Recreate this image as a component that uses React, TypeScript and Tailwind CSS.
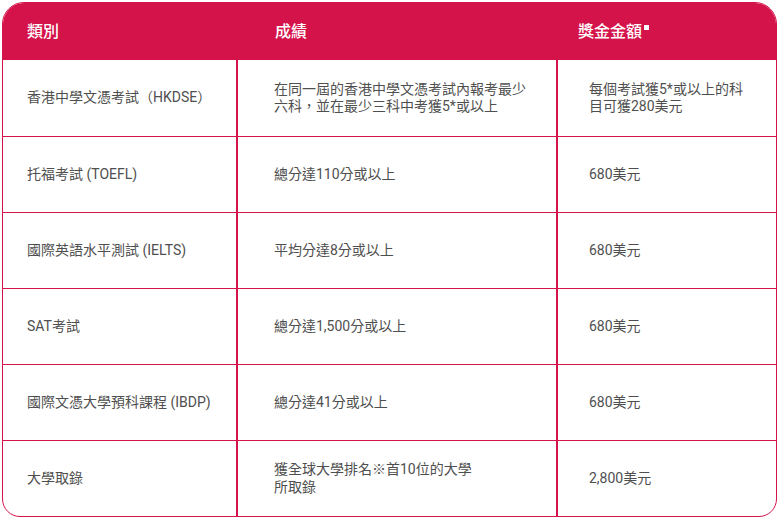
const rows = [
  {
    type: "香港中學文憑考試（HKDSE）",
    result: ["在同一屆的香港中學文憑考試內報考最少", "六科，並在最少三科中考獲5*或以上"],
    award: ["每個考試獲5*或以上的科", "目可獲280美元"],
  },
  { type: "托福考試 (TOEFL)", result: ["總分達110分或以上"], award: ["680美元"] },
  { type: "國際英語水平測試 (IELTS)", result: ["平均分達8分或以上"], award: ["680美元"] },
  { type: "SAT考試", result: ["總分達1,500分或以上"], award: ["680美元"] },
  { type: "國際文憑大學預科課程 (IBDP)", result: ["總分達41分或以上"], award: ["680美元"] },
  { type: "大學取錄", result: ["獲全球大學排名※首10位的大學", "所取錄"], award: ["2,800美元"] },
];

export default function App() {
  return (
    <div
      className="w-[779px] h-[519px] bg-white p-[2px]"
      style={{ fontFamily: 'Roboto, "Noto Sans CJK TC", sans-serif' }}
    >
      <div className="w-[775px] rounded-tl-[22px] rounded-tr-[22px] rounded-bl-[18px] rounded-br-[18px] border-[1.5px] border-[#d4134a] overflow-hidden">
        <div className="grid grid-cols-[235px_320px_1fr] h-[57px] bg-[#d4134a] text-white text-[16px] font-medium items-center">
          <div className="pl-[24px]">類別</div>
          <div className="pl-[37px]">成績</div>
          <div className="pl-[20px] flex items-start">
            獎金金額
            <span className="ml-[2px] mt-[5px] w-[5px] h-[5px] bg-white" />
          </div>
        </div>
        {rows.map((row, i) => (
          <div
            key={i}
            className={`grid grid-cols-[235px_320px_1fr] h-[76px] text-[14px] leading-[17.5px] text-[#4f4f4f] ${
              i > 0 ? "border-t-[1.5px] border-[#d4134a]" : ""
            }`}
          >
            <div className="flex items-center pl-[24px] border-r-2 border-[#d4134a]">{row.type}</div>
            <div className="flex flex-col justify-center pl-[36px] border-r-2 border-[#d4134a]">
              {row.result.map((t, j) => (
                <div key={j}>{t}</div>
              ))}
            </div>
            <div className="flex flex-col justify-center pl-[31px]">
              {row.award.map((t, j) => (
                <div key={j}>{t}</div>
              ))}
            </div>
          </div>
        ))}
      </div>
    </div>
  );
}
